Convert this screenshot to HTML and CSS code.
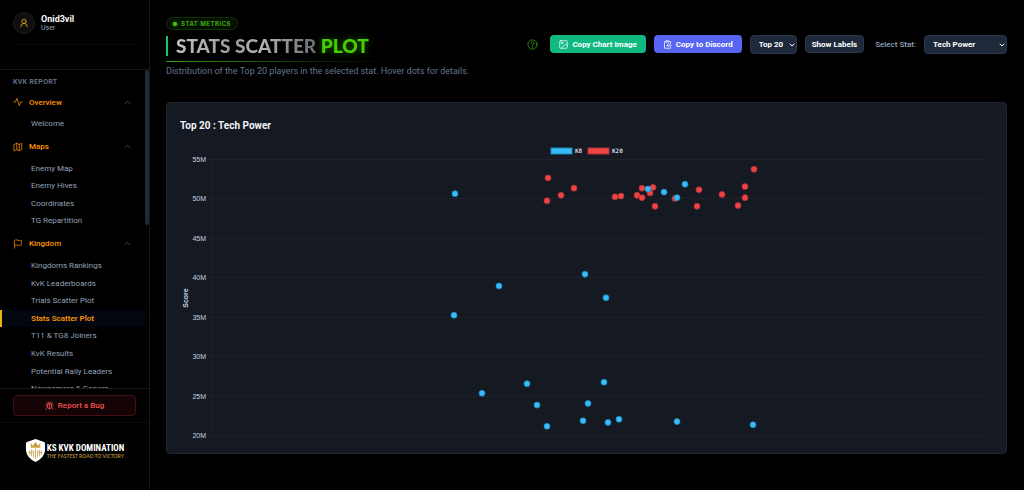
FILE: index.html
```html
<!DOCTYPE html>
<html lang="en">
<head>
  <meta charset="UTF-8" />
  <title>Stats Scatter Plot</title>
  <meta name="viewport" content="width=device-width, initial-scale=1" />
  <link rel="stylesheet" href="styles.css">
</head>
<body>
  <aside class="sidebar">
    <div class="sidebar-top">
      <div class="user">
        <span class="avatar">
          <svg class="icon" viewBox="0 0 24 24"><circle cx="12" cy="8" r="5"/><path d="M20 21a8 8 0 0 0-16 0"/></svg>
        </span>
        <div>
          <div class="user-name">Onid3vil</div>
          <div class="user-role">User</div>
        </div>
      </div>
    </div>

    <div class="nav-wrap">
      <nav class="nav">
        <div class="nav-title">KVK REPORT</div>

        <button class="group">
          <svg class="icon" viewBox="0 0 24 24"><path d="M22 12h-4l-3 9L9 3l-3 9H2"/></svg>
          <span>Overview</span>
          <svg class="icon chevron" viewBox="0 0 24 24"><path d="m4 16 8-8 8 8"/></svg>
        </button>
        <ul class="links">
          <li><a href="#">Welcome</a></li>
        </ul>

        <button class="group">
          <svg class="icon" viewBox="0 0 24 24"><path d="M3 6l6-3 6 3 6-3v15l-6 3-6-3-6 3zM9 3v15M15 6v15"/></svg>
          <span>Maps</span>
          <svg class="icon chevron" viewBox="0 0 24 24"><path d="m4 16 8-8 8 8"/></svg>
        </button>
        <ul class="links">
          <li><a href="#">Enemy Map</a></li>
          <li><a href="#">Enemy Hives</a></li>
          <li><a href="#">Coordinates</a></li>
          <li><a href="#">TG Repartition</a></li>
        </ul>

        <button class="group">
          <svg class="icon" viewBox="0 0 24 24"><path d="M4 15s1-1 4-1 5 2 8 2 4-1 4-1V3s-1 1-4 1-5-2-8-2-4 1-4 1zM4 22v-7"/></svg>
          <span>Kingdom</span>
          <svg class="icon chevron" viewBox="0 0 24 24"><path d="m4 16 8-8 8 8"/></svg>
        </button>
        <ul class="links">
          <li><a href="#">Kingdoms Rankings</a></li>
          <li><a href="#">KvK Leaderboards</a></li>
          <li><a href="#">Trials Scatter Plot</a></li>
          <li><a href="#" class="active">Stats Scatter Plot</a></li>
          <li><a href="#">T11 &amp; TG8 Joiners</a></li>
          <li><a href="#">KvK Results</a></li>
          <li><a href="#">Potential Rally Leaders</a></li>
          <li><a href="#">Newcomers &amp; Goners</a></li>
        </ul>
      </nav>
      <div class="scroll-thumb"></div>
    </div>

    <div class="bug-box">
      <button class="bug-btn">
        <svg class="icon" viewBox="0 0 24 24"><path d="M8 2l2 3M16 2l-2 3M7 9a5 4 0 0 1 10 0v6a5 6 0 0 1-10 0zM7 9h10M12 10v11M2 13h5M17 13h5M3 5c0 3 2 4 4 4M21 5c0 3-2 4-4 4M3 22c0-3 2-5 4-5M21 22c0-3-2-5-4-5"/></svg>
        Report a Bug
      </button>
    </div>

    <div class="brand">
      <svg class="shield" viewBox="0 0 22 26">
        <path d="M11 1 L20 4 Q21 4 21 6 V13 Q20 21 11 25 Q2 21 1 13 V6 Q1 4 2 4 Z" fill="#fff"/>
        <path d="M6 5l2 3 3-4 3 4 2-3v5H6z" fill="#c9a03c"/>
        <path d="M5 13v5M7 12v7M9 13v7M11 11v11M13 13v7M15 12v7M17 13v5M4 15h4M14 15h4" stroke="#c9a960" fill="none"/>
      </svg>
      <div>
        <div class="brand-name">KS KVK DOMINATION</div>
        <div class="brand-tag">THE FASTEST ROAD TO VICTORY</div>
      </div>
    </div>
  </aside>

  <main class="main">
    <header class="header">
      <div>
        <span class="badge"><i class="dot"></i>STAT METRICS</span>
        <h1 class="title"><span class="silver">STATS SCATTER</span> <span class="green">PLOT</span></h1>
        <p class="subtitle">Distribution of the Top 20 players in the selected stat. Hover dots for details.</p>
      </div>
      <div class="controls">
        <button class="help" aria-label="Help">
          <svg class="icon" viewBox="0 0 24 24"><circle cx="12" cy="12" r="10"/><path d="M9 9a3 3 0 0 1 6 1c0 2-3 2-3 4M12 17v1"/></svg>
        </button>
        <button class="btn btn-green">
          <svg class="icon" viewBox="0 0 24 24"><rect x="2" y="2" width="20" height="20" rx="2"/><circle cx="8" cy="8" r="2"/><path d="m22 15-5-4L6 22"/></svg>
          Copy Chart Image
        </button>
        <button class="btn btn-discord">
          <svg class="icon" viewBox="0 0 24 24"><rect x="8" y="2" width="8" height="4" rx="1"/><path d="M8 4H4v18h16v-4M16 4h4v6M22 14H11M15 10l-4 4 4 4"/></svg>
          Copy to Discord
        </button>
        <span class="select-box select-top">
          <select aria-label="Player count"><option>Top 20</option></select>
          <svg class="icon arrow" viewBox="0 0 24 24"><path d="m4 8 8 8 8-8"/></svg>
        </span>
        <button class="btn btn-dark">Show Labels</button>
        <label class="stat-label" for="stat">Select Stat:</label>
        <span class="select-box select-stat">
          <select id="stat"><option>Tech Power</option></select>
          <svg class="icon arrow" viewBox="0 0 24 24"><path d="m4 8 8 8 8-8"/></svg>
        </span>
      </div>
    </header>

    <section class="card">
      <h2 class="card-title">Top 20 : Tech Power</h2>
      <svg id="chart" class="chart" viewBox="0 0 813 304">
        <g class="legend">
          <rect class="key-k8" x="371" y="8" width="21" height="6"/>
          <text x="395" y="13">K8</text>
          <rect class="key-k20" x="408" y="8" width="21" height="6"/>
          <text x="432" y="13">K20</text>
        </g>
        <text class="axis-title" x="8" y="158" transform="rotate(-90 8 158)">Score</text>
      </svg>
    </section>
  </main>

  <script>
    // [x offset in the plot, score in millions]
    const k20 = [
      [337, 52.6], [336, 49.7], [350, 50.4], [363, 51.3], [404, 50.2],
      [410, 50.3], [426, 50.4], [431, 51.3], [431, 50.1], [439, 50.7],
      [442, 51.4], [444, 49], [464, 50], [488, 51.1], [486, 49],
      [511, 50.5], [527, 49.1], [534, 51.5], [534, 50.1], [543, 53.7]
    ];
    const k8 = [
      [437, 51.2], [453, 50.8], [466, 50.1], [474, 51.8], [244, 50.6],
      [243, 35.2], [288, 38.9], [374, 40.4], [395, 37.4], [271, 25.3],
      [316, 26.5], [326, 23.8], [336, 21.1], [393, 26.7], [377, 24],
      [372, 21.8], [397, 21.6], [408, 22], [466, 21.7], [542, 21.3]
    ];

    const chart = document.getElementById("chart");
    const left = 31;
    const right = 808;
    const top55 = 19;
    const perMillion = 276 / 35;

    function add(tag, attrs, text) {
      const el = document.createElementNS("http://www.w3.org/2000/svg", tag);
      for (const key in attrs) el.setAttribute(key, attrs[key]);
      if (text) el.textContent = text;
      chart.appendChild(el);
    }

    function yFor(score) {
      return top55 + (55 - score) * perMillion;
    }

    for (let m = 55; m >= 20; m -= 5) {
      const y = Math.round(yFor(m));
      add("rect", { class: "grid", x: left - 3, y: y, width: right - left + 3, height: 1 });
      add("text", { class: "tick", x: left - 5, y: y + 3 }, m + "M");
    }
    add("rect", { class: "grid", x: left, y: top55, width: 1, height: 277 });

    k20.forEach(p => add("circle", { class: "point key-k20", cx: left + p[0], cy: yFor(p[1]), r: 3 }));
    k8.forEach(p => add("circle", { class: "point key-k8", cx: left + p[0], cy: yFor(p[1]), r: 3 }));
  </script>
</body>
</html>
```
FILE: styles.css
```css
* {
  box-sizing: border-box;
}
body {
  margin: 0;
  background: #000;
  color: #e2e8f0;
  font-family: Roboto, Inter, sans-serif;
  font-size: 8px;
  display: flex;
  height: 100vh;
  overflow: hidden;
}
button, select {
  font-family: inherit;
  font-size: 8px;
  cursor: pointer;
}
.icon {
  width: 10px;
  height: 10px;
  fill: none;
  stroke: currentColor;
  stroke-width: 2;
  stroke-linecap: round;
  stroke-linejoin: round;
  flex-shrink: 0;
}

/* sidebar */
.sidebar {
  width: 150px;
  flex-shrink: 0;
  border-right: 1px solid #1c180c;
  display: flex;
  flex-direction: column;
}
.sidebar-top {
  height: 70px;
  padding: 12px 13px;
  border-bottom: 1px solid #1c180c;
}
.user {
  display: flex;
  align-items: center;
  gap: 6px;
  padding-bottom: 10px;
  border-bottom: 1px solid #0a0a0a;
}
.avatar {
  width: 22px;
  height: 22px;
  border-radius: 50%;
  border: 1px solid #1f1f1f;
  background: #0f0f0f;
  color: #e0ae18;
  display: flex;
  align-items: center;
  justify-content: center;
}
.user-name {
  font-size: 9px;
  font-weight: 700;
  line-height: 10px;
  color: #f8fafc;
}
.user-role {
  font-size: 7px;
  line-height: 9px;
  color: #94a3b8;
}
.nav-wrap {
  flex: 1;
  min-height: 0;
  overflow: hidden;
  display: flex;
}
.nav {
  flex: 1;
}
.scroll-thumb {
  width: 4px;
  height: 155px;
  border-radius: 2px;
  background: #1e293b;
}
.nav-title {
  padding: 7px 13px 0;
  font-size: 7px;
  line-height: 11px;
  font-weight: 600;
  letter-spacing: 0.3px;
  color: #64748b;
}
.group {
  width: 100%;
  height: 18px;
  margin-top: 5px;
  padding: 0 13px;
  border: none;
  background: none;
  color: #ff9408;
  font-weight: 500;
  display: flex;
  align-items: center;
  gap: 6px;
}
.group .icon {
  color: #dd8208;
}
.group .chevron {
  width: 7px;
  height: 7px;
  margin-left: auto;
  margin-right: 1px;
  opacity: 0.8;
}
.links {
  list-style: none;
  margin: 4px 0 0;
  padding: 0;
}
.links a {
  display: block;
  padding-left: 29px;
  border-left: 2px solid transparent;
  line-height: 2.2;
  color: #94a3b8;
  text-decoration: none;
}
.links a.active {
  color: #ff9408;
  font-weight: 600;
  background: #02060f;
  border-left-color: #eab308;
}
.bug-box {
  padding: 6px 13px;
  border-top: 1px solid #1c180c;
  border-bottom: 1px solid #0a0a0a;
}
.bug-btn {
  width: 100%;
  height: 21px;
  border: 1px solid #450f12;
  border-radius: 4px;
  background: #140405;
  color: #ef5350;
  font-weight: 500;
  display: flex;
  align-items: center;
  justify-content: center;
  gap: 4px;
}
.bug-btn .icon {
  width: 9px;
  height: 9px;
}
.brand {
  height: 67px;
  padding-bottom: 12px;
  display: flex;
  align-items: center;
  justify-content: center;
  gap: 1px;
}
.shield {
  width: 21px;
  height: 25px;
}
.brand-name {
  font-family: "Liberation Sans Narrow", "Roboto Condensed", Roboto, sans-serif;
  font-size: 9px;
  line-height: 10px;
  font-weight: 700;
  color: #fff;
}
.brand-tag {
  font-family: Lato, sans-serif;
  font-size: 5px;
  line-height: 6px;
  font-weight: 700;
  color: #a8842f;
}

/* page header */
.main {
  flex: 1;
  min-width: 0;
  padding: 17px 17px 0 16px;
}
.header {
  display: flex;
  justify-content: space-between;
  align-items: center;
}
.badge {
  display: inline-flex;
  align-items: center;
  gap: 4px;
  height: 13px;
  padding: 0 6px;
  border: 1px solid #0f3004;
  border-radius: 7px;
  background: #041001;
  color: #3fae0c;
  font-family: Inter, sans-serif;
  font-size: 6px;
  font-weight: 700;
  letter-spacing: 0.5px;
}
.dot {
  width: 4px;
  height: 4px;
  border-radius: 50%;
  background: #46c80a;
  box-shadow: 0 0 3px #46c80a;
}
.title {
  margin: 6px 0 0;
  padding-left: 8px;
  border-left: 2px solid #10c964;
  font-family: Lato, sans-serif;
  font-size: 19px;
  line-height: 20px;
  font-weight: 900;
}
.silver {
  background: linear-gradient(100deg, #c4c4c4, #9a9a9a 40%, #b4b4b4 60%, #666a70);
  -webkit-background-clip: text;
  background-clip: text;
  color: transparent;
}
.green {
  color: #46d000;
  text-shadow: 0 0 7px #46d00088;
}
.subtitle {
  margin: 5px 0 0;
  padding-top: 4px;
  border-top: 1px solid;
  border-image: linear-gradient(90deg, #2fa30a, #0b2603 50%, transparent 75%) 1;
  font-size: 9px;
  line-height: 10px;
  color: #64748b;
}
.controls {
  display: flex;
  align-items: center;
  gap: 8px;
  padding-bottom: 5px;
}
.help {
  width: 11px;
  height: 11px;
  margin-right: 4px;
  padding: 0;
  border: none;
  background: none;
  color: #2f9407;
  display: flex;
}
.help .icon {
  width: 11px;
  height: 11px;
}
.btn {
  height: 18px;
  padding: 0 9px;
  border: none;
  border-radius: 4px;
  color: #fff;
  font-weight: 700;
  white-space: nowrap;
  display: flex;
  align-items: center;
  gap: 4px;
}
.btn .icon {
  width: 9px;
  height: 9px;
}
.btn-green {
  background: #10b981;
}
.btn-discord {
  background: #5865f2;
}
.btn-dark {
  padding: 0 6px;
  border: 1px solid #2a3649;
  background: #1e293b;
}
.select-box {
  position: relative;
}
.select-box select {
  appearance: none;
  width: 100%;
  height: 19px;
  padding: 0 8px;
  border: 1px solid #2a3649;
  border-radius: 4px;
  background: #1e293b;
  color: #fff;
  font-weight: 700;
  display: block;
}
.arrow {
  position: absolute;
  right: 2px;
  top: 7px;
  width: 6px;
  height: 6px;
  stroke-width: 4;
  color: #fff;
  pointer-events: none;
}
.select-top {
  width: 47px;
}
.select-stat {
  width: 83px;
}
.stat-label {
  margin-left: 3px;
  color: #94a3b8;
  font-weight: 500;
}

/* chart */
.card {
  margin-top: 26px;
  padding: 17px 13px 9px;
  border: 1px solid #1f2633;
  border-radius: 4px;
  background: #151922;
}
.card-title {
  margin: 0 0 8px;
  font-size: 10px;
  line-height: 12px;
  color: #f1f5f9;
}
.chart {
  display: block;
  width: 100%;
}
.chart text {
  fill: #cbd5e1;
  font-family: "Liberation Sans", Arial, sans-serif;
  font-size: 7px;
}
.chart .legend text {
  font-family: "DejaVu Sans Mono", monospace;
  font-size: 6px;
  font-weight: 700;
}
.chart .tick {
  text-anchor: end;
}
.chart .axis-title {
  text-anchor: middle;
  font-weight: 700;
}
.grid {
  fill: #1d212a;
}
.key-k8 {
  fill: #38bdf8;
  stroke: #1c87b8;
}
.key-k20 {
  fill: #ef4444;
  stroke: #b03038;
}
.point {
  stroke-opacity: 0.8;
}
```
